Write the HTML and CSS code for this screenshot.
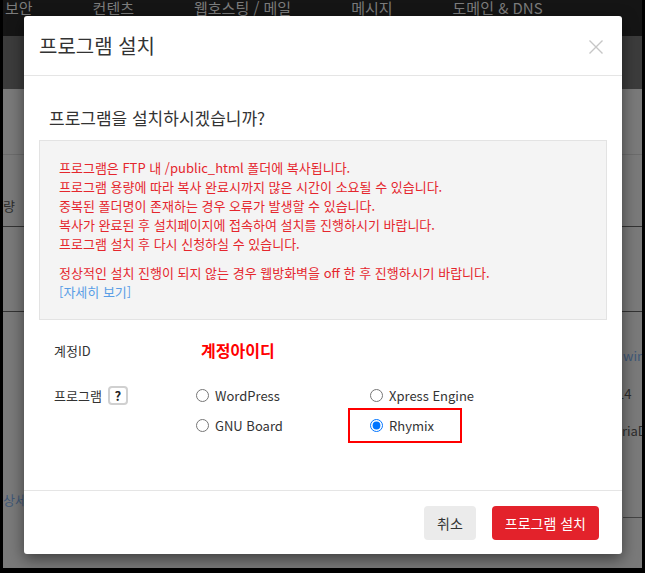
FILE: index.html
```html
<!DOCTYPE html>
<html lang="ko">
<head>
  <meta charset="UTF-8">
  <meta name="viewport" content="width=device-width, initial-scale=1.0">
  <title>프로그램 설치</title>
  <link rel="stylesheet" href="styles.css">
</head>
<body>
<div class="screen">
  <div class="page">
    <nav class="gnb">
      <span>보안</span>
      <span>컨텐츠</span>
      <span>웹호스팅 / 메일</span>
      <span>메시지</span>
      <span>도메인 &amp; DNS</span>
    </nav>
    <div class="band"></div>
    <div class="bg-row r1"><div></div><div></div></div>
    <div class="bg-row r2"><div class="bg-l">용량</div><div></div></div>
    <div class="bg-row r3"><div></div><div></div></div>
    <div class="bg-row r4">
      <div class="bg-l link">상세보기</div>
      <div class="bg-r">
        <div class="link">windows</div>
        <div class="shift-s">14</div>
        <div class="shift-l">MariaDB</div>
      </div>
    </div>
  </div>

  <div class="modal">
    <div class="modal-header">
      <h4>프로그램 설치</h4>
      <button class="close" type="button">
        <svg width="14" height="14" viewBox="0 0 14 14"><path d="M0.5 0.5L13.5 13.5M13.5 0.5L0.5 13.5" stroke="#c6c6c6" stroke-width="1.4" fill="none"/></svg>
      </button>
    </div>
    <div class="modal-body">
      <h5 class="question">프로그램을 설치하시겠습니까?</h5>
      <div class="notice">
        <p>프로그램은 FTP 내 /public_html 폴더에 복사됩니다.<br>
        프로그램 용량에 따라 복사 완료시까지 많은 시간이 소요될 수 있습니다.<br>
        중복된 폴더명이 존재하는 경우 오류가 발생할 수 있습니다.<br>
        복사가 완료된 후 설치페이지에 접속하여 설치를 진행하시기 바랍니다.<br>
        프로그램 설치 후 다시 신청하실 수 있습니다.</p>
        <p>정상적인 설치 진행이 되지 않는 경우 웹방화벽을 off 한 후 진행하시기 바랍니다.<br>
        <a href="#">[자세히 보기]</a></p>
      </div>
      <dl class="form">
        <dt>계정ID</dt>
        <dd class="account">계정아이디</dd>
        <dt>프로그램 <span class="help">?</span></dt>
        <dd class="programs">
          <label><input type="radio" name="prog"> WordPress</label>
          <label><input type="radio" name="prog"> Xpress Engine</label>
          <label><input type="radio" name="prog"> GNU Board</label>
          <label class="highlight"><input type="radio" name="prog" checked> Rhymix</label>
        </dd>
      </dl>
    </div>
    <div class="modal-footer">
      <button class="btn btn-cancel" type="button">취소</button>
      <button class="btn btn-install" type="button">프로그램 설치</button>
    </div>
  </div>
</div>
</body>
</html>
```

FILE: styles.css
```css
html, body {
  margin: 0;
  padding: 0;
  background: #000;
  font-family: "Noto Sans CJK KR", "Noto Sans", sans-serif;
}
.screen {
  position: relative;
  width: 639px;
  height: 568px;
  margin-left: 3px;
  overflow: hidden;
  background: #7a7a7a;
}

/* dimmed page behind the dialog */
.gnb {
  display: flex;
  gap: 60px;
  height: 36px;
  padding-left: 2px;
  background: #151515;
  overflow: hidden;
}
.gnb span {
  margin-top: -1px;
  font-size: 15px;
  line-height: 18px;
  color: #7c7c7c;
  white-space: nowrap;
}
.band {
  height: 53px;
  background: #3c3c3c;
}
.bg-row {
  display: grid;
  grid-template-columns: 620px 1fr;
  font-size: 13px;
  color: #2c2c2c;
  white-space: nowrap;
}
.bg-row.r1 {
  height: 65px;
  border-bottom: 1px solid #6c6c6c;
}
.bg-row.r2 {
  height: 71px;
  border-bottom: 1px solid #333;
}
.bg-row.r2 .bg-l {
  margin-left: -12px;
  padding-top: 41px;
}
.bg-row.r3 {
  height: 84px;
  border-bottom: 1px solid #333;
}
.bg-row.r4 .bg-l {
  padding-top: 178px;
  line-height: 20px;
}
.bg-r {
  height: 206px;
  padding-top: 25px;
  box-sizing: border-box;
  border-bottom: 1px solid #444;
  line-height: 37.5px;
}
.shift-s {
  margin-left: -6px;
}
.shift-l {
  margin-left: -19px;
}
.link {
  color: #3f5878;
}

/* dialog */
.modal {
  position: absolute;
  left: 21px;
  top: 16px;
  width: 598px;
  background: #fff;
  border-radius: 3px;
  box-shadow: 0 5px 15px rgba(0,0,0,0.5);
}
.modal-header {
  display: flex;
  align-items: center;
  justify-content: space-between;
  height: 59px;
  padding: 0 19px 0 15px;
  border-bottom: 1px solid #e5e5e5;
}
.modal-header h4 {
  margin: 0;
  font-size: 20px;
  font-weight: normal;
  color: #333;
}
.close {
  display: flex;
  padding: 0;
  margin-top: 2px;
  border: 0;
  background: none;
}
.modal-body {
  padding: 30px 15px 50px;
}
.question {
  margin: 0 0 10px;
  padding-left: 10px;
  font-size: 17px;
  line-height: 24px;
  font-weight: normal;
  color: #333;
}
.notice {
  height: 180px;
  box-sizing: border-box;
  padding: 17px 19px 0;
  background: #f4f4f4;
  border: 1px solid #e3e3e3;
  font-size: 13px;
  line-height: 19px;
  color: #e5262d;
}
.notice p {
  margin: 0 0 10px;
}
.notice a {
  color: #5a9ee6;
  text-decoration: none;
}
.form {
  display: grid;
  grid-template-columns: 142px 1fr;
  row-gap: 15px;
  margin: 15px 0 0;
  padding-left: 15px;
}
.form dt {
  display: flex;
  align-items: center;
  gap: 6px;
  height: 30px;
  font-size: 13px;
  color: #333;
}
.form dd {
  margin: 0;
}
.help {
  width: 20px;
  height: 19px;
  box-sizing: border-box;
  border: 2px solid #d0d0d0;
  border-radius: 4px;
  font-size: 13px;
  font-weight: bold;
  line-height: 15px;
  text-align: center;
  color: #222;
}
.account {
  padding-left: 5px;
  font-size: 16px;
  font-weight: bold;
  line-height: 30px;
  color: #f00;
}
.programs {
  display: grid;
  grid-template-columns: 174px 174px;
}
.programs label {
  display: flex;
  align-items: center;
  gap: 6px;
  height: 30px;
  font-size: 13px;
  color: #333;
}
.programs input {
  width: 13px;
  height: 13px;
  margin: 0;
}
.highlight {
  position: relative;
}
.highlight::before {
  content: "";
  position: absolute;
  left: -22px;
  top: -2px;
  width: 114px;
  height: 35px;
  box-sizing: border-box;
  border: 2px solid #f00;
}
.modal-footer {
  display: flex;
  justify-content: flex-end;
  gap: 16px;
  padding: 15px 23px 14px;
  border-top: 1px solid #e5e5e5;
}
.btn {
  height: 34px;
  padding: 0 13px;
  border: 0;
  border-radius: 4px;
  font-family: inherit;
  font-size: 14px;
}
.btn-cancel {
  background: #ebebeb;
  color: #333;
}
.btn-install {
  background: #e3222b;
  color: #fff;
}
```
